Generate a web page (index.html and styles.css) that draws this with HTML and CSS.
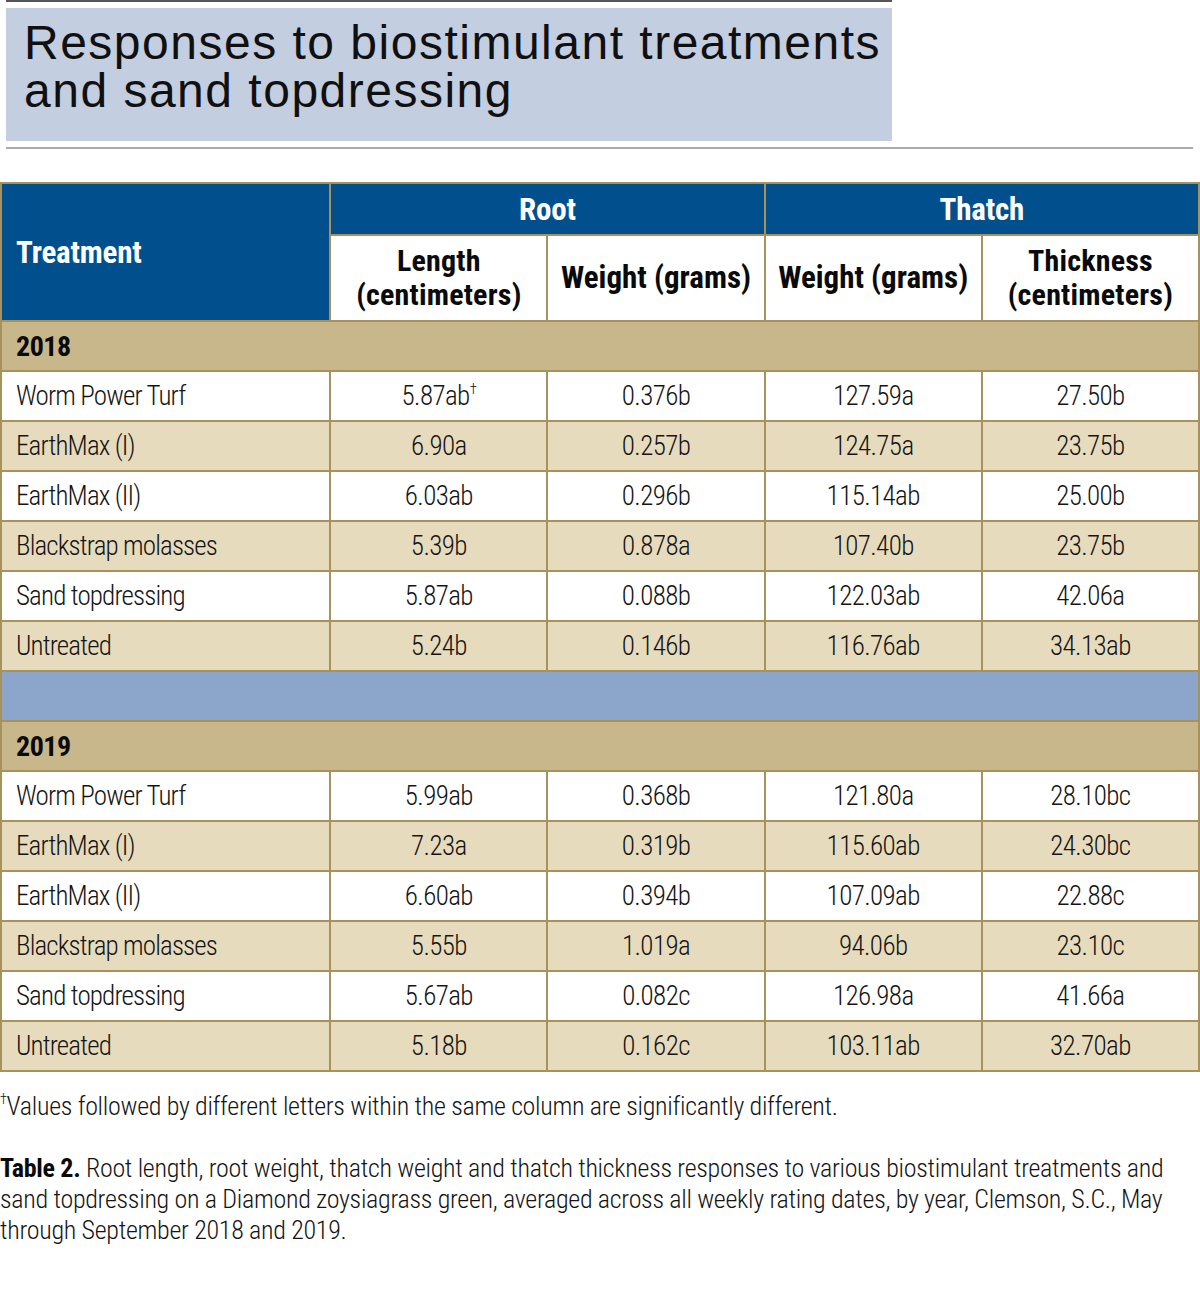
FILE: index.html
```html
<!DOCTYPE html>
<html lang="en">
<head>
<meta charset="utf-8">
<title>Responses to biostimulant treatments and sand topdressing</title>
<link rel="stylesheet" href="styles.css">
</head>
<body>
<div class="page">
  <header class="heading">
    <div class="title-box">
      <h1 class="title">Responses to biostimulant treatments<br>and sand topdressing</h1>
    </div>
  </header>
  <div class="rule"></div>

  <table class="data">
    <colgroup>
      <col class="c-treat">
      <col class="c-num">
      <col class="c-num">
      <col class="c-num">
      <col class="c-num">
    </colgroup>
    <thead>
      <tr class="h1">
        <th rowspan="2" class="treat-head">Treatment</th>
        <th colspan="2" class="group">Root</th>
        <th colspan="2" class="group">Thatch</th>
      </tr>
      <tr class="h2">
        <th class="sub two">Length<br>(centimeters)</th>
        <th class="sub">Weight (grams)</th>
        <th class="sub">Weight (grams)</th>
        <th class="sub two">Thickness<br>(centimeters)</th>
      </tr>
    </thead>
    <tbody>
      <tr class="year"><td colspan="5">2018</td></tr>
      <tr class="odd"><td>Worm Power Turf</td><td>5.87ab<sup>†</sup></td><td>0.376b</td><td>127.59a</td><td>27.50b</td></tr>
      <tr class="even"><td>EarthMax (I)</td><td>6.90a</td><td>0.257b</td><td>124.75a</td><td>23.75b</td></tr>
      <tr class="odd"><td>EarthMax (II)</td><td>6.03ab</td><td>0.296b</td><td>115.14ab</td><td>25.00b</td></tr>
      <tr class="even"><td>Blackstrap molasses</td><td>5.39b</td><td>0.878a</td><td>107.40b</td><td>23.75b</td></tr>
      <tr class="odd"><td>Sand topdressing</td><td>5.87ab</td><td>0.088b</td><td>122.03ab</td><td>42.06a</td></tr>
      <tr class="even"><td>Untreated</td><td>5.24b</td><td>0.146b</td><td>116.76ab</td><td>34.13ab</td></tr>
      <tr class="spacer"><td colspan="5"></td></tr>
      <tr class="year"><td colspan="5">2019</td></tr>
      <tr class="odd"><td>Worm Power Turf</td><td>5.99ab</td><td>0.368b</td><td>121.80a</td><td>28.10bc</td></tr>
      <tr class="even"><td>EarthMax (I)</td><td>7.23a</td><td>0.319b</td><td>115.60ab</td><td>24.30bc</td></tr>
      <tr class="odd"><td>EarthMax (II)</td><td>6.60ab</td><td>0.394b</td><td>107.09ab</td><td>22.88c</td></tr>
      <tr class="even"><td>Blackstrap molasses</td><td>5.55b</td><td>1.019a</td><td>94.06b</td><td>23.10c</td></tr>
      <tr class="odd"><td>Sand topdressing</td><td>5.67ab</td><td>0.082c</td><td>126.98a</td><td>41.66a</td></tr>
      <tr class="even"><td>Untreated</td><td>5.18b</td><td>0.162c</td><td>103.11ab</td><td>32.70ab</td></tr>
    </tbody>
  </table>

  <p class="footnote"><sup>†</sup>Values followed by different letters within the same column are significantly different.</p>
  <p class="caption"><b>Table 2.</b> Root length, root weight, thatch weight and thatch thickness responses to various biostimulant treatments and<br>sand topdressing on a Diamond zoysiagrass green, averaged across all weekly rating dates, by year, Clemson, S.C., May<br>through September 2018 and 2019.</p>
</div>
</body>
</html>
```

FILE: styles.css
```css
html, body {
  margin: 0;
  padding: 0;
  background: #ffffff;
}

.page {
  width: 1200px;
  font-family: "Roboto Condensed", Roboto, "DejaVu Sans Condensed", sans-serif;
  font-stretch: condensed;
  color: #111;
}

.heading {
  margin-left: 6px;
  width: 886px;
  border-top: 2px solid #555555;
  padding-top: 6px;
}

.title-box {
  background: #c3cee0;
  height: 133px;
  padding: 11px 0 0 18px;
  box-sizing: border-box;
}

.title {
  margin: 0;
  font-family: "Liberation Sans", Arial, sans-serif;
  font-stretch: normal;
  font-weight: normal;
  font-size: 48px;
  line-height: 48px;
  letter-spacing: 1.5px;
  color: #101010;
}

.rule {
  margin: 6px 7px 0 6px;
  height: 2px;
  background: #aaaaaa;
}

.data {
  margin-top: 33px;
  width: 1200px;
  border-collapse: collapse;
  table-layout: fixed;
  border: 2px solid #a8925c;
}

.c-treat { width: 329px; }
.c-num { width: 217px; }

.data th,
.data td {
  border: 2px solid #a8925c;
  padding: 0;
}

.data thead th {
  font-weight: bold;
  letter-spacing: -0.2px;
}

.h1 th {
  height: 50px;
}

.treat-head {
  background: #01508d;
  color: #ffffff;
  text-align: left;
  padding-left: 14px !important;
  font-size: 31px;
}

.group {
  background: #01508d;
  color: #ffffff;
  font-size: 31px;
  text-align: center;
}

.sub {
  background: #ffffff;
  color: #0a0a0a;
  height: 84px;
  font-size: 31px;
  line-height: 34px;
  text-align: center;
}

.data thead .sub {
  letter-spacing: 0;
}

.data thead .sub.two {
  font-size: 30px;
  letter-spacing: 0.2px;
}

.data tbody td {
  height: 48px;
  font-size: 27px;
  font-weight: 300;
  letter-spacing: -0.6px;
  text-align: center;
  color: #141414;
}

.data tbody td:first-child {
  text-align: left;
  padding-left: 14px;
  letter-spacing: -0.85px;
}

.data tbody tr.year td {
  background: #c8b78b;
  font-weight: bold;
  font-size: 28px;
  letter-spacing: -0.5px;
  color: #0a0a0a;
}

.odd td { background: #ffffff; }
.even td { background: #e7dbbd; }

.data tbody tr.spacer td {
  background: #8ca5cb;
  height: 48px;
}

sup {
  font-size: 0.55em;
  vertical-align: 0.75em;
  line-height: 0;
}

.footnote {
  margin: 19px 0 0 0;
  font-size: 26px;
  line-height: 30px;
  font-weight: 300;
  letter-spacing: -0.3px;
  color: #141414;
  white-space: nowrap;
}

.caption {
  margin: 32px 0 0 0;
  font-size: 26px;
  line-height: 31px;
  font-weight: 300;
  letter-spacing: -0.3px;
  color: #141414;
  white-space: nowrap;
}

.caption b {
  font-weight: bold;
  color: #0a0a0a;
}
```
